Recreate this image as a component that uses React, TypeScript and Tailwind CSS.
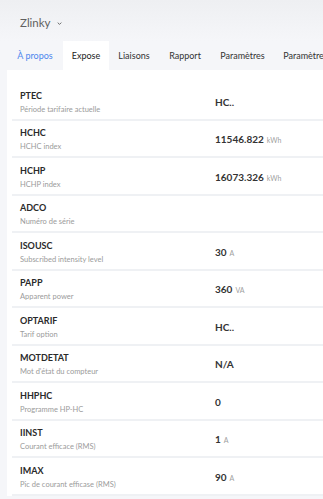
const tabs = [
  { label: 'À propos', w: 'w-[56px]' },
  { label: 'Expose', w: 'w-[46px]', active: true },
  { label: 'Liaisons', w: 'w-[50px]' },
  { label: 'Rapport', w: 'w-[52px]' },
  { label: 'Paramètres', w: 'w-[63px]' },
  { label: 'Paramètres', w: 'w-[63px]' },
];

const rows: { name: string; desc: string; value?: string; unit?: string }[] = [
  { name: 'PTEC', desc: 'Période tarifaire actuelle', value: 'HC..' },
  { name: 'HCHC', desc: 'HCHC index', value: '11546.822', unit: 'kWh' },
  { name: 'HCHP', desc: 'HCHP index', value: '16073.326', unit: 'kWh' },
  { name: 'ADCO', desc: 'Numéro de série' },
  { name: 'ISOUSC', desc: 'Subscribed intensity level', value: '30', unit: 'A' },
  { name: 'PAPP', desc: 'Apparent power', value: '360', unit: 'VA' },
  { name: 'OPTARIF', desc: 'Tarif option', value: 'HC..' },
  { name: 'MOTDETAT', desc: "Mot d'état du compteur", value: 'N/A' },
  { name: 'HHPHC', desc: 'Programme HP-HC', value: '0' },
  { name: 'IINST', desc: 'Courant efficace (RMS)', value: '1', unit: 'A' },
  { name: 'IMAX', desc: 'Pic de courant efficase (RMS)', value: '90', unit: 'A' },
];

export default function App() {
  return (
    <div
      className="h-[499px] w-[323px] overflow-hidden bg-[#f5f6f9]"
      style={{ fontFamily: 'Lato, "Noto Sans", sans-serif' }}
    >
      {/* header */}
      <div className="flex h-[41px] items-center bg-gradient-to-b from-[#eeeff2] to-[#f5f6f9] pl-[20px] pt-[5px]">
        <span className="text-[11.5px] text-[#5f5f5f]">Zlinky</span>
        <svg viewBox="0 0 8 5" className="ml-[6px] mt-[1px] h-[3px] w-[5px]">
          <path d="M1 1l3 3 3-3" fill="none" stroke="#666" strokeWidth="1.6" />
        </svg>
      </div>

      {/* tabs */}
      <div className="ml-[7px] flex h-[29px] whitespace-nowrap">
        {tabs.map((t, i) => (
          <div
            key={i}
            className={`flex shrink-0 items-center justify-center text-[9px] ${t.w} ${
              t.active ? 'bg-white text-[#222]' : i === 0 ? 'text-[#4d87ee]' : 'text-[#333]'
            }`}
          >
            {t.label}
          </div>
        ))}
      </div>

      {/* card */}
      <div className="ml-[7px] bg-white pl-[5px] pt-[13px]">
        {rows.map((r) => (
          <div
            key={r.name}
            className="flex h-[37.5px] items-center border-b-2 border-[#eff1f4] pl-[8px] pt-[3px]"
          >
            <div className="flex w-[195px] shrink-0 flex-col">
              <span className="text-[9px] font-bold leading-[14px] text-[#2a2a2a]">{r.name}</span>
              <span className="text-[7.5px] leading-[13px] text-[#9b9b9b]">{r.desc}</span>
            </div>
            {r.value && (
              <div className="flex items-baseline">
                <span className="text-[10px] font-bold text-[#333]">{r.value}</span>
                {r.unit && <span className="ml-[3px] text-[7px] text-[#a0a0a0]">{r.unit}</span>}
              </div>
            )}
          </div>
        ))}
      </div>
    </div>
  );
}
